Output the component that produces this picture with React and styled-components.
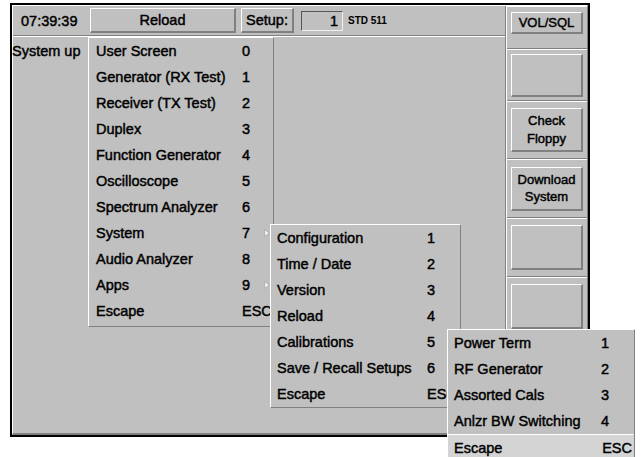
import React from "react";
import styled, { createGlobalStyle } from "styled-components";

const Global = createGlobalStyle`
  html, body { margin: 0; padding: 0; background: #ffffff; }
  body { font-family: "Liberation Sans", Arial, sans-serif; }
`;

const BG = "#c0c0c0";
const DARK = "#808080";

const Screen = styled.div`
  position: relative;
  width: 642px;
  height: 457px;
  overflow: hidden;
  background: #fff;
  font-family: "Liberation Sans", Arial, sans-serif;
  color: #000;
  -webkit-text-stroke: 0.45px #000;
`;

const Frame = styled.div`
  position: absolute;
  left: 10px;
  top: 3px;
  width: 580px;
  height: 434px;
  box-sizing: border-box;
  border: 2px solid #000;
  background: ${BG};
`;

const Bevel = styled.div`
  box-sizing: border-box;
  height: 100%;
  border-top: 1px solid #fff;
  border-left: 1px solid #fff;
  border-right: 1px solid ${DARK};
  border-bottom: 2px solid ${DARK};
  display: flex;
`;

const LeftPart = styled.div`
  width: 493px;
  box-sizing: border-box;
  border-right: 1px solid ${DARK};
  display: flex;
  flex-direction: column;
`;

const TopBar = styled.div`
  height: 30px;
  box-sizing: border-box;
  border-bottom: 1px solid ${DARK};
  display: flex;
  align-items: center;
`;

const TimeCell = styled.div`
  width: 77px;
  padding-left: 8px;
  box-sizing: border-box;
  font-size: 14.5px;
`;

const RaisedButton = styled.div`
  box-sizing: border-box;
  width: ${(p) => p.$w}px;
  height: ${(p) => p.$h}px;
  margin-left: ${(p) => p.$ml || 0}px;
  border-top: 1px solid #fff;
  border-left: 1px solid #fff;
  border-right: 2px solid ${DARK};
  border-bottom: 2px solid ${DARK};
  display: flex;
  align-items: center;
  justify-content: center;
  text-align: center;
  font-size: ${(p) => p.$fs || 14.5}px;
  line-height: ${(p) => p.$lh || 16}px;
  background: ${BG};
`;

const NumberBox = styled.div`
  box-sizing: border-box;
  width: 42px;
  height: 20px;
  margin-left: 7px;
  border: 1px solid #555;
  border-right-color: #eee;
  border-bottom-color: #eee;
  display: flex;
  align-items: center;
  justify-content: flex-end;
  padding-right: 4px;
  font-size: 14.5px;
`;

const SmallLabel = styled.div`
  margin-left: 5px;
  font-size: 10px;
  font-weight: bold;
  -webkit-text-stroke: 0;
`;

const ContentPanel = styled.div`
  flex: 1;
  border-top: 1px solid #fff;
  padding-top: 1px;
`;

const StatusText = styled.div`
  height: 26px;
  line-height: 26px;
  font-size: 14.5px;
  margin-left: -1px;
`;

const RightColumn = styled.div`
  flex: 1;
  border-left: 1px solid #fff;
  display: flex;
  flex-direction: column;
`;

const SideCell = styled.div`
  box-sizing: border-box;
  height: ${(p) => p.$h}px;
  display: flex;
  justify-content: center;
  align-items: ${(p) => (p.$top ? "flex-start" : "center")};
  padding-top: ${(p) => p.$pt || 0}px;
  border-bottom: 1px solid ${DARK};
  border-top: 1px solid #fff;
`;

const Menu = styled.div`
  position: absolute;
  left: ${(p) => p.$x}px;
  top: ${(p) => p.$y}px;
  width: ${(p) => p.$w}px;
  box-sizing: border-box;
  background: ${BG};
  border-top: 1px solid #fff;
  border-left: 1px solid #fff;
  border-right: 1px solid ${DARK};
  border-bottom: 1px solid ${DARK};
  padding-bottom: ${(p) => p.$pb || 0}px;
`;

const Row = styled.div`
  position: relative;
  height: 26px;
  display: flex;
  align-items: center;
  padding-left: ${(p) => p.$pl}px;
  font-size: 14.5px;
  box-sizing: border-box;
  ${(p) =>
    p.$active &&
    `
    background: #d4d4d4;
    border-top: 1px solid #fff;
  `}
`;

const Label = styled.span`
  width: ${(p) => p.$w}px;
  flex: none;
  white-space: nowrap;
`;

const Key = styled.span`
  flex: 1;
  white-space: nowrap;
  text-align: ${(p) => (p.$right ? "right" : "left")};
  padding-right: ${(p) => (p.$right ? 2 : 0)}px;
`;

const Arrow = styled.svg`
  position: absolute;
  left: ${(p) => p.$x}px;
  top: 9px;
`;

function SubArrow({ x }) {
  return (
    <Arrow $x={x} width="6" height="8" viewBox="0 0 6 8">
      <path d="M0.5 0.5 L5.5 4 L0.5 7.5 Z" fill="#f0f0f0" stroke="#a8a8a8" strokeWidth="0.8" />
    </Arrow>
  );
}

const mainItems = [
  ["User Screen", "0"],
  ["Generator (RX Test)", "1"],
  ["Receiver (TX Test)", "2"],
  ["Duplex", "3"],
  ["Function Generator", "4"],
  ["Oscilloscope", "5"],
  ["Spectrum Analyzer", "6"],
  ["System", "7", true],
  ["Audio Analyzer", "8"],
  ["Apps", "9", true],
  ["Escape", "ESC"],
];

const systemItems = [
  ["Configuration", "1"],
  ["Time / Date", "2"],
  ["Version", "3"],
  ["Reload", "4"],
  ["Calibrations", "5"],
  ["Save / Recall Setups", "6"],
  ["Escape", "ESC"],
];

const calItems = [
  ["Power Term", "1"],
  ["RF Generator", "2"],
  ["Assorted Cals", "3"],
  ["Anlzr BW Switching", "4"],
  ["Escape", "ESC", false, true],
];

export default function App() {
  return (
    <Screen>
      <Global />
      <Frame>
        <Bevel>
          <LeftPart>
            <TopBar>
              <TimeCell>07:39:39</TimeCell>
              <RaisedButton $w={146} $h={25}>Reload</RaisedButton>
              <RaisedButton $w={53} $h={25} $ml={5}>Setup:</RaisedButton>
              <NumberBox>1</NumberBox>
              <SmallLabel>STD 511</SmallLabel>
            </TopBar>
            <ContentPanel>
              <StatusText>System up</StatusText>
            </ContentPanel>
          </LeftPart>
          <RightColumn>
            <SideCell $h={43} $top $pt={5}>
              <RaisedButton $w={72} $h={22} $fs={13}>VOL/SQL</RaisedButton>
            </SideCell>
            <SideCell $h={52}>
              <RaisedButton $w={72} $h={43} />
            </SideCell>
            <SideCell $h={58}>
              <RaisedButton $w={72} $h={44} $fs={13} $lh={18}>Check<br />Floppy</RaisedButton>
            </SideCell>
            <SideCell $h={59}>
              <RaisedButton $w={72} $h={44} $fs={13} $lh={17}>Download<br />System</RaisedButton>
            </SideCell>
            <SideCell $h={59}>
              <RaisedButton $w={72} $h={45} />
            </SideCell>
            <SideCell $h={59}>
              <RaisedButton $w={72} $h={45} />
            </SideCell>
            <SideCell $h={59}>
              <RaisedButton $w={72} $h={45} />
            </SideCell>
          </RightColumn>
        </Bevel>
      </Frame>

      <Menu $x={88} $y={37} $w={186} $pb={2}>
        {mainItems.map(([l, k, sub]) => (
          <Row key={l} $pl={7}>
            <Label $w={146}>{l}</Label>
            <Key>{k}</Key>
            {sub && <SubArrow x={175} />}
          </Row>
        ))}
      </Menu>

      <Menu $x={270} $y={224} $w={191}>
        {systemItems.map(([l, k]) => (
          <Row key={l} $pl={6}>
            <Label $w={150}>{l}</Label>
            <Key>{k}</Key>
          </Row>
        ))}
      </Menu>

      <Menu $x={447} $y={329} $w={188}>
        {calItems.map(([l, k, , active]) => (
          <Row key={l} $pl={6} $active={active}>
            <Label $w={147}>{l}</Label>
            <Key $right={active}>{k}</Key>
          </Row>
        ))}
      </Menu>
    </Screen>
  );
}
